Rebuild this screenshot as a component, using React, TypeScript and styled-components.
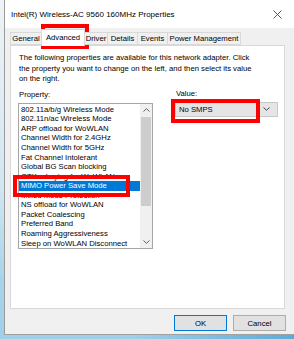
import React from "react";
import styled, { createGlobalStyle } from "styled-components";

const Global = createGlobalStyle`
  html, body { margin: 0; padding: 0; }
  body { font-family: "Liberation Sans", Arial, sans-serif; }
`;

const Desktop = styled.div`
  position: relative;
  width: 294px;
  height: 339px;
  overflow: hidden;
  box-sizing: border-box;
  padding-left: 4px;
  background:
    linear-gradient(to right, rgba(255,255,255,0) 45%, rgba(40,140,200,0.55) 100%),
    linear-gradient(to bottom, #eef3f6 0%, #d2e7f2 55%, #a8d4ea 82%, #9fd0ea 100%);
`;

const Window = styled.div`
  width: 300px;
  height: 335px;
  box-sizing: border-box;
  background: #f0f0f0;
  border-left: 1px solid #9a9a9a;
  border-bottom: 1px solid #a0a0a0;
  display: flex;
  flex-direction: column;
  font-size: 7.7px;
  color: #000;
`;

const TitleBar = styled.div`
  height: 28px;
  flex: none;
  background: #fff;
  display: flex;
  align-items: center;
  justify-content: space-between;
  padding: 0 22px 0 6px;
  font-size: 8px;
  color: #000;
`;

const Body = styled.div`
  flex: 1;
  display: flex;
  flex-direction: column;
  padding: 0 19px 0 5px;
`;

const TabStrip = styled.div`
  height: 17px;
  flex: none;
  display: flex;
  align-items: flex-end;
  padding-left: 1px;
  position: relative;
  z-index: 1;
`;

const Tab = styled.div<{ $w: number; $active?: boolean }>`
  width: ${(p) => p.$w}px;
  height: ${(p) => (p.$active ? 17 : 13)}px;
  box-sizing: border-box;
  margin-bottom: ${(p) => (p.$active ? -1 : 0)}px;
  border: 1px solid #d9d9d9;
  border-bottom: ${(p) => (p.$active ? "none" : "1px solid #d9d9d9")};
  margin-left: -1px;
  background: ${(p) => (p.$active ? "#fff" : "#f0f0f0")};
  display: flex;
  align-items: center;
  justify-content: center;
  padding-top: ${(p) => (p.$active ? 0 : 1)}px;
  white-space: nowrap;
  line-height: 10px;
`;

const Panel = styled.div`
  height: 264px;
  flex: none;
  box-sizing: border-box;
  background: #fff;
  border: 1px solid #d9d9d9;
  padding: 7px 8px 0 7px;
  display: flex;
  flex-direction: column;
`;

const Intro = styled.p`
  margin: 0;
  padding-left: 1px;
  line-height: 10.5px;
  white-space: nowrap;
`;

const Columns = styled.div`
  display: grid;
  grid-template-columns: 135px 103px;
  column-gap: 22px;
  margin-top: 5px;
`;

const Field = styled.div`
  display: flex;
  flex-direction: column;
`;

const Label = styled.div<{ $top?: number }>`
  line-height: 10px;
  height: 10px;
  padding-left: 1px;
  margin-top: ${(p) => p.$top ?? 0}px;
  margin-bottom: 3px;
`;

const ListBox = styled.div`
  height: 146px;
  box-sizing: border-box;
  border: 1px solid #a6a6a6;
  display: flex;
  background: #fff;
`;

const Items = styled.div`
  flex: 1;
  padding-top: 1.2px;
  overflow: hidden;
`;

const Item = styled.div<{ $selected?: boolean }>`
  height: 9.57px;
  line-height: 9.57px;
  padding-left: 2px;
  white-space: nowrap;
  background: ${(p) => (p.$selected ? "#0078d7" : "transparent")};
  color: ${(p) => (p.$selected ? "#fff" : "#000")};
`;

const ScrollBar = styled.div`
  width: 12px;
  flex: none;
  background: #f0f0f0;
  display: flex;
  flex-direction: column;
`;

const ScrollArrow = styled.div`
  height: 12px;
  flex: none;
  display: flex;
  align-items: center;
  justify-content: center;
`;

const Thumb = styled.div`
  height: 89px;
  margin: 1px 1px 0 1px;
  background: #cdcdcd;
`;

const Track = styled.div`
  flex: 1;
`;

const Combo = styled.div`
  height: 15px;
  box-sizing: border-box;
  background: #e5e5e5;
  border: 1px solid #c8c8c8;
  display: flex;
  align-items: center;
  justify-content: space-between;
  padding: 0 7px 0 3px;
`;

const ButtonRow = styled.div`
  display: flex;
  justify-content: flex-end;
  gap: 6px;
  margin-top: 6px;
  margin-right: -1px;
`;

const Button = styled.div<{ $default?: boolean }>`
  width: 53px;
  height: 16px;
  box-sizing: border-box;
  background: #e1e1e1;
  border: 1px solid ${(p) => (p.$default ? "#0078d7" : "#adadad")};
  display: flex;
  align-items: center;
  justify-content: center;
`;

const Highlight = styled.div<{ $x: number; $y: number; $w: number; $h: number }>`
  position: absolute;
  left: ${(p) => p.$x}px;
  top: ${(p) => p.$y}px;
  width: ${(p) => p.$w}px;
  height: ${(p) => p.$h}px;
  box-sizing: border-box;
  border: 4px solid #ff0000;
  pointer-events: none;
`;

const CloseIcon = () => (
  <svg width="9" height="9" viewBox="0 0 9 9">
    <path d="M0.5 0.5 L8.5 8.5 M8.5 0.5 L0.5 8.5" stroke="#444" strokeWidth="0.9" fill="none" />
  </svg>
);

const Chevron = ({ up, color = "#606060" }: { up?: boolean; color?: string }) => (
  <svg width="7" height="4" viewBox="0 0 7 4">
    <path
      d={up ? "M0.5 3.5 L3.5 0.7 L6.5 3.5" : "M0.5 0.5 L3.5 3.3 L6.5 0.5"}
      stroke={color}
      strokeWidth="1"
      fill="none"
    />
  </svg>
);

const tabs = [
  { label: "General", w: 32 },
  { label: "Advanced", w: 44, active: true },
  { label: "Driver", w: 24 },
  { label: "Details", w: 31 },
  { label: "Events", w: 31 },
  { label: "Power Management", w: 74 },
];

const properties = [
  "802.11a/b/g Wireless Mode",
  "802.11n/ac Wireless Mode",
  "ARP offload for WoWLAN",
  "Channel Width for 2.4GHz",
  "Channel Width for 5GHz",
  "Fat Channel Intolerant",
  "Global BG Scan blocking",
  "GTK rekeying for WoWLAN",
  "MIMO Power Save Mode",
  "Mixed Mode Protection",
  "NS offload for WoWLAN",
  "Packet Coalescing",
  "Preferred Band",
  "Roaming Aggressiveness",
  "Sleep on WoWLAN Disconnect",
];

export default function App() {
  return (
    <>
      <Global />
      <Desktop>
        <Window>
          <TitleBar>
            <span>Intel(R) Wireless-AC 9560 160MHz Properties</span>
            <CloseIcon />
          </TitleBar>
          <Body>
            <TabStrip>
              {tabs.map((t) => (
                <Tab key={t.label} $w={t.w} $active={t.active}>
                  {t.label}
                </Tab>
              ))}
            </TabStrip>
            <Panel>
              <Intro>
                The following properties are available for this network adapter. Click
                <br />
                the property you want to change on the left, and then select its value
                <br />
                on the right.
              </Intro>
              <Columns>
                <Field>
                  <Label $top={0}>Property:</Label>
                  <ListBox>
                    <Items>
                      {properties.map((p) => (
                        <Item key={p} $selected={p === "MIMO Power Save Mode"}>
                          {p}
                        </Item>
                      ))}
                    </Items>
                    <ScrollBar>
                      <ScrollArrow>
                        <Chevron up />
                      </ScrollArrow>
                      <Thumb />
                      <Track />
                      <ScrollArrow>
                        <Chevron />
                      </ScrollArrow>
                    </ScrollBar>
                  </ListBox>
                </Field>
                <Field>
                  <Label $top={-1}>Value:</Label>
                  <Combo>
                    <span>No SMPS</span>
                    <Chevron color="#444" />
                  </Combo>
                </Field>
              </Columns>
            </Panel>
            <ButtonRow>
              <Button $default>OK</Button>
              <Button>Cancel</Button>
            </ButtonRow>
          </Body>
        </Window>
        <Highlight $x={41} $y={24} $w={48} $h={25} />
        <Highlight $x={13} $y={175} $w={117} $h={22} />
        <Highlight $x={171} $y={99} $w={89} $h={24} />
      </Desktop>
    </>
  );
}
